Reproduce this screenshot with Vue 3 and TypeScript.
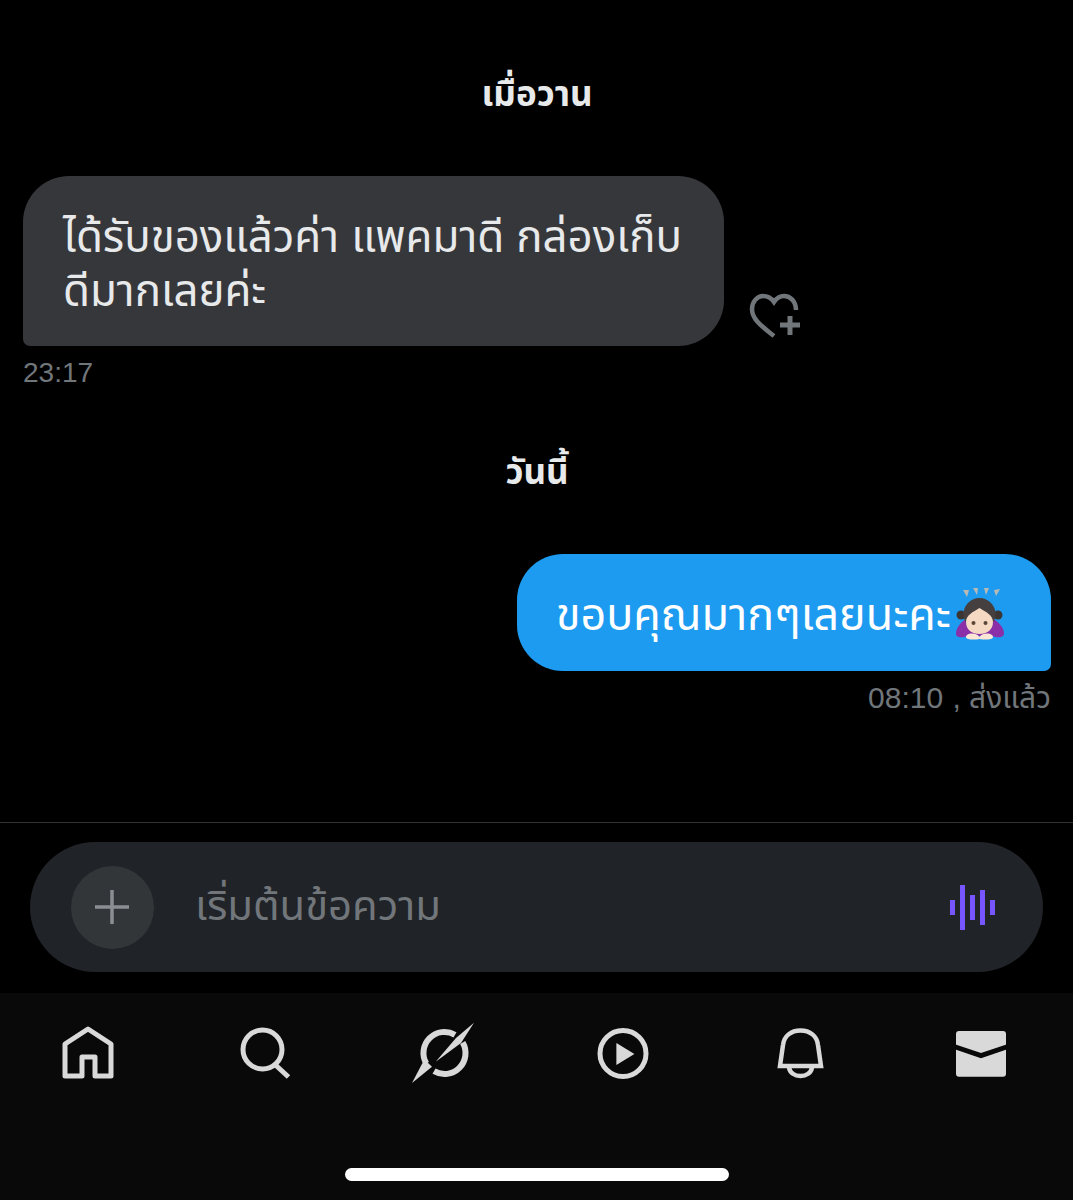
<script setup lang="ts">
  // voice button bars, heights in px
  const voiceBars = [15, 45, 25, 35, 15]
</script>

<template>
  <div class="screen">
    <div class="chat">
      <div class="date date-first">เมื่อวาน</div>

      <div class="row-in">
        <div class="bubble bubble-in">ได้รับของแล้วค่า แพคมาดี กล่องเก็บ<br />ดีมากเลยค่ะ</div>
        <svg class="react" width="52" height="46" viewBox="0 0 52 46" fill="none" stroke="#71767b">
          <path
            d="M47 17C47 8 41 3 35 3C30 3 27 6 25 9C23 6 19 3 14 3C8 3 3 9 3 16C3 27 14 34 25 43"
            stroke-width="4.5"
          />
          <path d="M41 23V42M31 32H51" stroke-width="5" />
        </svg>
      </div>
      <div class="time time-in">23:17</div>

      <div class="date date-second">วันนี้</div>

      <div class="row-out">
        <div class="bubble bubble-out">
          <span class="out-text">ขอบคุณมากๆเลยนะคะ</span>
          <svg class="emoji" width="48" height="54" viewBox="0 0 48 54">
            <path d="M7 2l6 0-2 7zM17 0l5 0-1 7zM28 0l5 0-3 7zM38 2l6-1-4 7z" fill="#b9bab5" />
            <circle cx="5" cy="27" r="4.500" fill="#3b3634" />
            <circle cx="42" cy="27" r="4.500" fill="#3b3634" />
            <path d="M0 46C0 40 5 33 12 30H36C42 33 48 40 48 45C48 50 42 50 36 48H12C6 50 0 50 0 46Z" fill="#8a2fa8" />
            <circle cx="23.500" cy="26" r="16" fill="#45403f" />
            <path d="M10 34C10 27 17 24 23.500 20C30 24 37 27 37 34C37 42 31 46 23.500 46C16 46 10 42 10 34Z" fill="#f6d9c3" />
            <circle cx="17.500" cy="35" r="2" fill="#5a4636" />
            <circle cx="29.500" cy="35" r="2" fill="#5a4636" />
            <path d="M10 49C10 45 20 44 23.500 49C27 44 37 45 37 49C37 52 28 52 23.500 51C19 52 10 52 10 49Z" fill="#fbe6d6" />
          </svg>
        </div>
      </div>
      <div class="time time-out"><span class="time-num">08:10</span> , ส่งแล้ว</div>
    </div>

    <div class="composer-wrap">
      <div class="composer">
        <div class="add-btn">
          <svg width="36" height="36" viewBox="0 0 36 36" stroke="#8b8f93" stroke-width="3.500">
            <path d="M18 1V35M1 18H35" />
          </svg>
        </div>
        <div class="placeholder">เริ่มต้นข้อความ</div>
        <div class="voice">
          <span v-for="(h, i) in voiceBars" :key="i" class="voice-bar" :style="{ height: h + 'px' }"></span>
        </div>
      </div>
    </div>

    <div class="nav">
      <div class="nav-icons">
        <svg class="nav-icon" viewBox="0 0 64 64" fill="none" stroke="#d9d9d9" stroke-width="5" stroke-linejoin="round">
          <path d="M25 55V36H38V55H54V23L31 8L8 23V55Z" />
        </svg>
        <svg class="nav-icon" viewBox="0 0 64 64" fill="none" stroke="#d9d9d9" stroke-width="5">
          <circle cx="27.500" cy="28.500" r="19.500" />
          <path d="M40.500 44L53.500 56" />
        </svg>
        <svg class="nav-icon" viewBox="0 0 64 64" fill="none">
          <path d="M42 13.800A21 21 0 0 0 13.300 42.500M49.700 21.500A21 21 0 0 1 21 50.200" stroke="#d9d9d9" stroke-width="6" />
          <path d="M61 1.700L48 22L22.700 40.700L43 17Z" fill="#d9d9d9" />
          <path d="M-1 62L10 41L13 40L19 45.700Z" fill="#d9d9d9" />
        </svg>
        <svg class="nav-icon" viewBox="0 0 64 64" fill="none">
          <circle cx="31" cy="32.500" r="23" stroke="#d9d9d9" stroke-width="5" />
          <path d="M24.400 22V44L42.400 33Z" fill="#d9d9d9" />
        </svg>
        <svg class="nav-icon" viewBox="0 0 64 64" fill="none" stroke="#d9d9d9" stroke-width="4.500">
          <path d="M10 45H51L48 24C47 15 40 9.500 30.500 9.500C21 9.500 14 15 13 24Z" />
          <path d="M19 46C20 58 41 58 42 46" />
        </svg>
        <svg class="nav-icon" viewBox="0 0 64 64" fill="none">
          <rect x="8" y="10" width="50" height="45.700" rx="3" fill="#d9d9d9" />
          <path d="M6 25.500L33 34.500L60 25.500" stroke="#090909" stroke-width="5" />
        </svg>
      </div>
      <div class="home-bar"></div>
    </div>
  </div>
</template>

<style scoped>
  .screen {
    width: 1073px;
    height: 1200px;
    display: flex;
    flex-direction: column;
    background: #000;
    overflow: hidden;
    font-family: "Liberation Sans", "Noto Sans Thai", "Noto Sans", "DejaVu Sans", sans-serif;
  }

  .chat {
    height: 823px;
    box-sizing: border-box;
    border-bottom: 1px solid #2f3336;
    padding: 0 22px 0 23px;
    display: flex;
    flex-direction: column;
  }

  .date {
    text-align: center;
    color: #e7e9ea;
    font-size: 35px;
    font-weight: 700;
    line-height: 44px;
  }

  .date-first {
    margin-top: 72px;
    margin-bottom: 60px;
  }

  .date-second {
    margin-top: 59px;
    margin-bottom: 60px;
  }

  .row-in {
    display: flex;
    align-items: flex-end;
    gap: 25px;
  }

  .row-out {
    display: flex;
    justify-content: flex-end;
  }

  .bubble {
    box-sizing: border-box;
    font-size: 43.8px;
    line-height: 54px;
  }

  .bubble-in {
    width: 701px;
    height: 170px;
    padding: 34px 40px 0;
    border-radius: 46px 46px 46px 7px;
    background: #36373b;
    color: #e7e9ea;
    white-space: nowrap;
  }

  .react {
    margin-bottom: 7px;
    overflow: visible;
  }

  .bubble-out {
    width: 534px;
    height: 117px;
    padding: 0 47px 0 39px;
    display: flex;
    align-items: center;
    justify-content: space-between;
    border-radius: 46px 46px 7px 46px;
    background: #1d9bf0;
    color: #fff;
  }

  .out-text {
    font-size: 44.8px;
    padding-top: 2px;
  }

  .emoji {
    flex-shrink: 0;
    margin-top: 4px;
  }

  .time {
    margin-top: 9px;
    color: #71767b;
    font-size: 30px;
    line-height: 36px;
  }

  .time-in {
    font-size: 28px;
  }

  .time-out {
    text-align: right;
  }

  .time-num {
    margin-right: 1px;
  }

  .composer-wrap {
    height: 170px;
    box-sizing: border-box;
    padding: 19px 30px 0;
  }

  .composer {
    height: 130px;
    box-sizing: border-box;
    padding: 0 48px 0 40.5px;
    display: flex;
    align-items: center;
    border-radius: 65px;
    background: #202327;
  }

  .add-btn {
    width: 83px;
    height: 83px;
    flex-shrink: 0;
    display: flex;
    align-items: center;
    justify-content: center;
    border-radius: 50%;
    background: #333639;
  }

  .placeholder {
    flex: 1;
    margin-left: 41.5px;
    color: #71767b;
    font-size: 41.8px;
  }

  .voice {
    display: flex;
    align-items: center;
    gap: 5px;
  }

  .voice-bar {
    width: 5px;
    background: #7856ff;
  }

  .nav {
    flex: 1;
    display: flex;
    flex-direction: column;
    align-items: center;
    background: #090909;
  }

  .nav-icons {
    width: 100%;
    box-sizing: border-box;
    padding: 28px 4px 0 0;
    display: grid;
    grid-template-columns: repeat(6, 1fr);
    justify-items: center;
  }

  .nav-icon {
    width: 64px;
    height: 64px;
    overflow: visible;
  }

  .home-bar {
    width: 384px;
    height: 13px;
    margin-top: 83px;
    border-radius: 7px;
    background: #fff;
  }
</style>

<style>
  body {
    background: #000;
  }
</style>
